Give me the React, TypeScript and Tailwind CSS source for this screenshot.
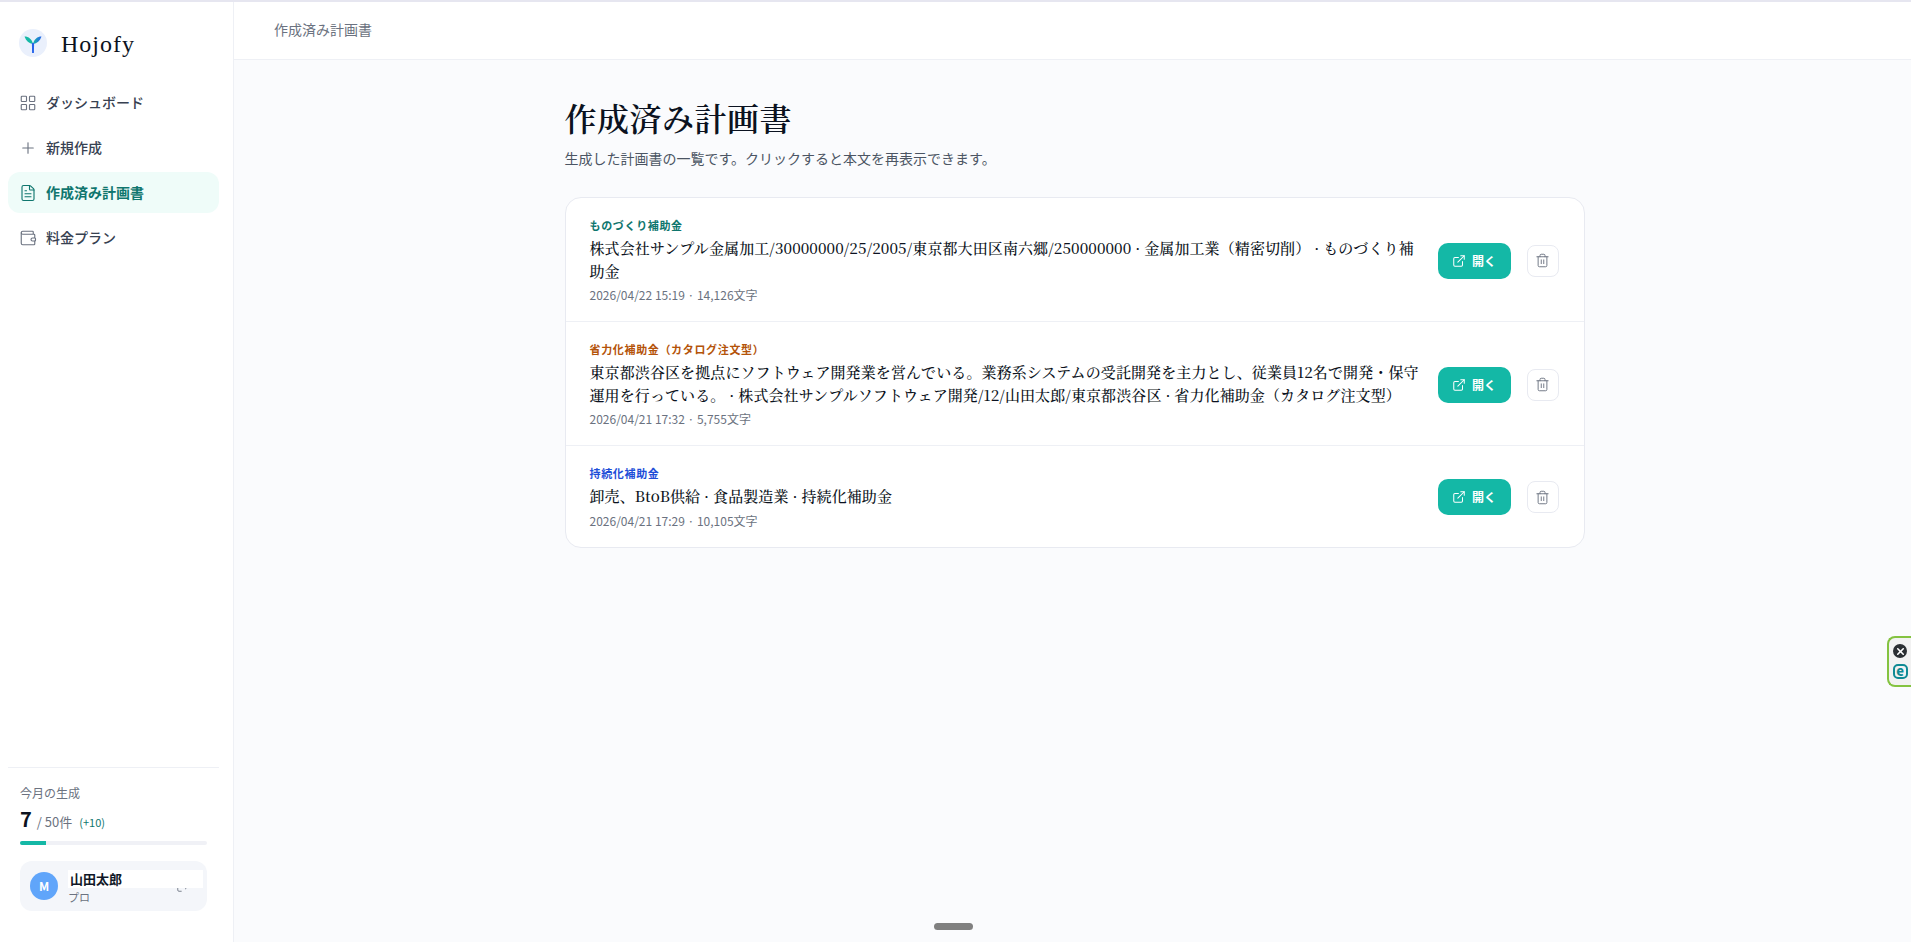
import { LayoutGrid, Plus, FileText, Wallet, ExternalLink, Trash2, LogOut, X } from "lucide-react";

const navItems = [
  { label: "ダッシュボード", icon: LayoutGrid },
  { label: "新規作成", icon: Plus },
  { label: "作成済み計画書", icon: FileText, active: true },
  { label: "料金プラン", icon: Wallet },
];

const plans = [
  {
    tag: "ものづくり補助金",
    tagColor: "text-[#0f766e]",
    title:
      "株式会社サンプル金属加工/30000000/25/2005/東京都大田区南六郷/250000000 · 金属加工業（精密切削） · ものづくり補助金",
    meta: "2026/04/22 15:19 · 14,126文字",
  },
  {
    tag: "省力化補助金（カタログ注文型）",
    tagColor: "text-[#b45309]",
    title:
      "東京都渋谷区を拠点にソフトウェア開発業を営んでいる。業務系システムの受託開発を主力とし、従業員12名で開発・保守運用を行っている。 · 株式会社サンプルソフトウェア開発/12/山田太郎/東京都渋谷区 · 省力化補助金（カタログ注文型）",
    meta: "2026/04/21 17:32 · 5,755文字",
  },
  {
    tag: "持続化補助金",
    tagColor: "text-[#1d4ed8]",
    title: "卸売、BtoB供給 · 食品製造業 · 持続化補助金",
    meta: "2026/04/21 17:29 · 10,105文字",
  },
];

function Sidebar() {
  return (
    <aside className="w-[234px] shrink-0 bg-white border-r border-[#eef0f5] flex flex-col">
      {/* Logo */}
      <div className="flex items-start gap-[14px] pl-[19px] pt-[27px] h-[78px]">
        <div className="w-[28px] h-[28px] rounded-full bg-[#eaf0fc] flex items-center justify-center">
          <svg width="20" height="20" viewBox="0 0 20 20">
            <defs>
              <linearGradient id="wing" x1="0" y1="0" x2="1" y2="0">
                <stop offset="0" stopColor="#14b8a6" />
                <stop offset="1" stopColor="#2563eb" />
              </linearGradient>
            </defs>
            <path d="M1.5 3.5C5.5 3.5 9 6 10 11C6 10.5 3 8 1.5 3.5Z" fill="#14b8a6" />
            <path d="M18.5 3.5C14.5 3.5 11 6 10 11C14 10.5 17 8 18.5 3.5Z" fill="url(#wing)" />
            <path d="M8.9 10h2.2L10.9 20H9.1Z" fill="#2563eb" />
          </svg>
        </div>
        <span className="[font-family:'Liberation_Serif',serif] text-[24px] tracking-[1px] text-[#0b1220] leading-[30px]">
          Hojofy
        </span>
      </div>

      {/* Nav */}
      <nav className="flex flex-col gap-[4px] pl-[8px] pr-[14px] pt-[2px]">
        {navItems.map((item) => {
          const Icon = item.icon;
          return (
            <div
              key={item.label}
              className={
                item.active
                  ? "h-[41px] flex items-center gap-[9px] pl-[11px] rounded-[12px] bg-[#effcf9] text-[#0f766e] text-[14px] font-semibold"
                  : "h-[41px] flex items-center gap-[9px] pl-[11px] rounded-[12px] text-[#374151] text-[14px] font-medium"
              }
            >
              <Icon size={18} strokeWidth={1.5} className={item.active ? "text-[#0f766e]" : "text-[#6b7280]"} />
              {item.label}
            </div>
          );
        })}
      </nav>

      {/* Usage */}
      <div className="mt-auto ml-[8px] mr-[14px] border-t border-[#eef0f5] pt-[16px] pb-[31px]">
        <div className="px-[12px] text-[12px] leading-[18px] text-[#6b7280]">今月の生成</div>
        <div className="px-[12px] mt-[2px] flex items-baseline h-[28px] text-[#6b7280]">
          <span className="text-[20px] font-bold text-[#0b1220]">7</span>
          <span className="text-[13px] ml-[5px]">/ 50件</span>
          <span className="text-[11px] ml-[7px] text-[#0f766e]">(+10)</span>
        </div>
        <div className="mx-[12px] mt-[9px] h-[4px] rounded-full bg-[#f0f1f6] overflow-hidden">
          <div className="h-full w-[14%] bg-[#14b8a6]" />
        </div>
        <div className="relative mx-[12px] mt-[16px] h-[50px] rounded-[12px] bg-[#f4f6fa] flex items-center pl-[10px] gap-[10px]">
          <div className="w-[28px] h-[28px] rounded-full bg-[#60a5fa] text-white text-[12px] font-bold flex items-center justify-center">
            M
          </div>
          <span className="text-[11px] leading-[16px] mt-[21px] text-[#6b7280]">プロ</span>
          <LogOut size={14} strokeWidth={1.5} className="absolute left-[156px] top-[18px] text-[#6b7280]" />
          <div className="absolute left-[48px] top-[9px] w-[135px] h-[18px] bg-white pl-[2px] text-[13px] leading-[18px] font-bold text-[#111827]">
            山田太郎
          </div>
        </div>
      </div>
    </aside>
  );
}

function PlanRow({ plan }: { plan: (typeof plans)[number] }) {
  return (
    <div className="flex items-center pl-[24px] pr-[25px] pt-[19px] pb-[17px] border-b border-[#eef0f5] last:border-b-0">
      <div className="flex-1 min-w-0">
        <div className={`text-[11px] leading-[16px] font-semibold tracking-[0.06em] ${plan.tagColor}`}>{plan.tag}</div>
        <div className="mt-[4px] [font-family:'Noto_Serif_CJK_JP','Liberation_Serif',serif] text-[15px] leading-[22.5px] font-medium tracking-[0.1px] text-[#0b1220]">
          {plan.title}
        </div>
        <div className="mt-[4px] text-[12px] leading-[18px] text-[#6b7280]">{plan.meta}</div>
      </div>
      <button className="ml-[12px] w-[73px] h-[36px] shrink-0 rounded-[10px] bg-[#14b8a6] text-white text-[12px] font-bold flex items-center justify-center gap-[6px]">
        <ExternalLink size={14} strokeWidth={1.75} />
        開く
      </button>
      <button className="ml-[16px] w-[32px] h-[32px] shrink-0 rounded-[8px] border border-[#e8eaf1] bg-white text-[#6b7280] flex items-center justify-center">
        <Trash2 size={15} strokeWidth={1.5} />
      </button>
    </div>
  );
}

export default function App() {
  return (
    <div className="h-screen flex flex-col overflow-hidden bg-[#fafbfd] [font-family:'Noto_Sans_CJK_JP','Noto_Sans',sans-serif]">
      <div className="h-[2px] shrink-0 bg-[#e6e6f0]" />
      <div className="flex flex-1 min-h-0">
        <Sidebar />
        <main className="flex-1 min-w-0 flex flex-col">
          <header className="h-[58px] shrink-0 bg-white border-b border-[#eef0f5] flex items-center pl-[40px] pb-[2px] text-[14px] text-[#6b7280]">
            作成済み計画書
          </header>
          <div className="pl-[4px]">
            <div className="w-[1020px] mx-auto pt-[35px]">
              <h1 className="[font-family:'Noto_Serif_CJK_JP','Liberation_Serif',serif] text-[32px] leading-[45px] font-semibold tracking-[0.5px] text-[#0b1220]">
                作成済み計画書
              </h1>
              <p className="mt-[8px] text-[14px] leading-[20px] text-[#4b5563]">
                生成した計画書の一覧です。クリックすると本文を再表示できます。
              </p>
              <div className="mt-[29px] bg-white border border-[#e8eaf1] rounded-[16px] overflow-hidden">
                {plans.map((plan) => (
                  <PlanRow key={plan.tag} plan={plan} />
                ))}
              </div>
            </div>
          </div>
        </main>
      </div>

      {/* Browser extension tab */}
      <div className="fixed right-0 top-[636px] w-[24px] h-[51px] rounded-l-[8px] border-2 border-r-0 border-[#84c341] bg-[#f2f2f2] flex flex-col items-center pt-[6px] gap-[6px]">
        <div className="w-[14px] h-[14px] rounded-full bg-[#2b2f33] text-white flex items-center justify-center">
          <X size={11} strokeWidth={3.5} />
        </div>
        <div className="w-[15px] h-[15px] rounded-[5px] border-2 border-[#0f8a94] text-[#0f8a94] text-[13px] leading-none font-black flex items-center justify-center pb-[2px]">
          e
        </div>
      </div>

      {/* Bottom drag handle */}
      <div className="fixed left-[934px] top-[923px] w-[39px] h-[7px] rounded-full bg-[#808080]" />
    </div>
  );
}
